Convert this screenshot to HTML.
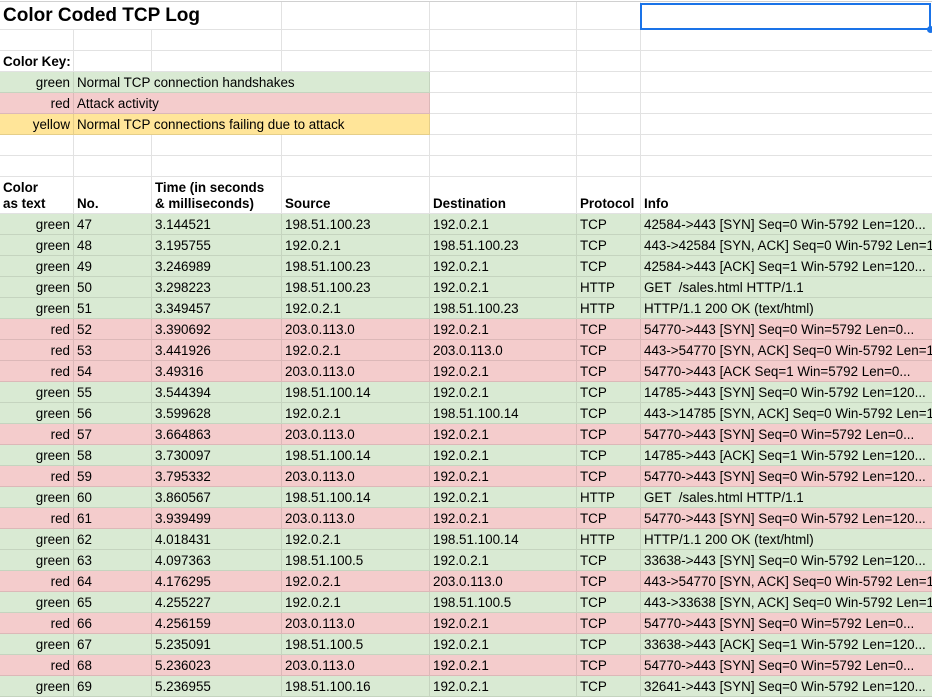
<!DOCTYPE html><html><head><style>
body{margin:0;width:932px;height:696px;overflow:hidden;background:#fff;font-family:"Liberation Sans",Arial,sans-serif;font-size:13.4px;color:#000;position:relative}
.r{position:absolute;left:0;width:932px;height:21px;display:flex}
.c{box-sizing:border-box;height:100%;border-right:1px solid #e2e2e2;border-bottom:1px solid #e2e2e2;padding:3px 3px 0 3px;white-space:nowrap;overflow:hidden;line-height:16px}
.w0{width:74px;text-align:right}.w1{width:78px}.w2{width:130px}.w3{width:148px}.w4{width:147px}.w5{width:64px}.w6{width:291px;border-right:none}
.g .c{background:#d9ead3;border-color:#c5d4bf}.rd .c{background:#f4cccc;border-color:#dcb8b8}.y .c{background:#ffe599;border-color:#e5ce89}
.b{font-weight:bold}
</style></head><body>
<div style="position:absolute;left:0;top:0;width:932px;height:2px;border-bottom:1px solid #d0d0d0;box-sizing:border-box"></div>
<div class="r" style="top:2px;height:28px"><div class="c w0 b" style="width:282px;text-align:left;font-size:19px;line-height:24px;padding-top:2px;border-right:1px solid #e2e2e2">Color Coded TCP Log</div><div class="c w3"></div><div class="c w4"></div><div class="c w5"></div><div class="c w6"></div></div>
<div style="position:absolute;left:640px;top:3px;width:291px;height:27px;border:2px solid #1a73e8;box-sizing:border-box"></div>
<div style="position:absolute;left:927px;top:26px;width:7px;height:7px;border-radius:50%;background:#1a73e8"></div>
<div class="r" style="top:30px"><div class="c w0"></div><div class="c w1"></div><div class="c w2"></div><div class="c w3"></div><div class="c w4"></div><div class="c w5"></div><div class="c w6"></div></div>
<div class="r" style="top:51px"><div class="c w0 b" style="text-align:left">Color Key:</div><div class="c w1"></div><div class="c w2"></div><div class="c w3"></div><div class="c w4"></div><div class="c w5"></div><div class="c w6"></div></div>
<div class="r" style="top:72px"><div class="g" style="display:flex"><div class="c w0">green</div><div class="c" style="width:356px">Normal TCP connection handshakes</div></div><div class="c w4"></div><div class="c w5"></div><div class="c w6"></div></div>
<div class="r" style="top:93px"><div class="rd" style="display:flex"><div class="c w0">red</div><div class="c" style="width:356px">Attack activity</div></div><div class="c w4"></div><div class="c w5"></div><div class="c w6"></div></div>
<div class="r" style="top:114px"><div class="y" style="display:flex"><div class="c w0">yellow</div><div class="c" style="width:356px">Normal TCP connections failing due to attack</div></div><div class="c w4"></div><div class="c w5"></div><div class="c w6"></div></div>
<div class="r" style="top:135px"><div class="c w0"></div><div class="c w1"></div><div class="c w2"></div><div class="c w3"></div><div class="c w4"></div><div class="c w5"></div><div class="c w6"></div></div>
<div class="r" style="top:156px"><div class="c w0"></div><div class="c w1"></div><div class="c w2"></div><div class="c w3"></div><div class="c w4"></div><div class="c w5"></div><div class="c w6"></div></div>
<div class="r b" style="top:177px;height:37px"><div class="c w0" style="text-align:left">Color<br>as text</div><div class="c w1" style="padding-top:19px">No.</div><div class="c w2">Time (in seconds<br>&amp; milliseconds)</div><div class="c w3" style="padding-top:19px">Source</div><div class="c w4" style="padding-top:19px">Destination</div><div class="c w5" style="padding-top:19px">Protocol</div><div class="c w6" style="padding-top:19px">Info</div></div>
<div id="d"></div>
<script>
const rows=[
["g",47,"3.144521","198.51.100.23","192.0.2.1","TCP","42584->443 [SYN] Seq=0 Win-5792 Len=120..."],
["g",48,"3.195755","192.0.2.1","198.51.100.23","TCP","443->42584 [SYN, ACK] Seq=0 Win-5792 Len=120..."],
["g",49,"3.246989","198.51.100.23","192.0.2.1","TCP","42584->443 [ACK] Seq=1 Win-5792 Len=120..."],
["g",50,"3.298223","198.51.100.23","192.0.2.1","HTTP","GET &nbsp;/sales.html HTTP/1.1"],
["g",51,"3.349457","192.0.2.1","198.51.100.23","HTTP","HTTP/1.1 200 OK (text/html)"],
["rd",52,"3.390692","203.0.113.0","192.0.2.1","TCP","54770->443 [SYN] Seq=0 Win=5792 Len=0..."],
["rd",53,"3.441926","192.0.2.1","203.0.113.0","TCP","443->54770 [SYN, ACK] Seq=0 Win-5792 Len=120..."],
["rd",54,"3.49316","203.0.113.0","192.0.2.1","TCP","54770->443 [ACK Seq=1 Win=5792 Len=0..."],
["g",55,"3.544394","198.51.100.14","192.0.2.1","TCP","14785->443 [SYN] Seq=0 Win-5792 Len=120..."],
["g",56,"3.599628","192.0.2.1","198.51.100.14","TCP","443->14785 [SYN, ACK] Seq=0 Win-5792 Len=120..."],
["rd",57,"3.664863","203.0.113.0","192.0.2.1","TCP","54770->443 [SYN] Seq=0 Win=5792 Len=0..."],
["g",58,"3.730097","198.51.100.14","192.0.2.1","TCP","14785->443 [ACK] Seq=1 Win-5792 Len=120..."],
["rd",59,"3.795332","203.0.113.0","192.0.2.1","TCP","54770->443 [SYN] Seq=0 Win-5792 Len=120..."],
["g",60,"3.860567","198.51.100.14","192.0.2.1","HTTP","GET &nbsp;/sales.html HTTP/1.1"],
["rd",61,"3.939499","203.0.113.0","192.0.2.1","TCP","54770->443 [SYN] Seq=0 Win-5792 Len=120..."],
["g",62,"4.018431","192.0.2.1","198.51.100.14","HTTP","HTTP/1.1 200 OK (text/html)"],
["g",63,"4.097363","198.51.100.5","192.0.2.1","TCP","33638->443 [SYN] Seq=0 Win-5792 Len=120..."],
["rd",64,"4.176295","192.0.2.1","203.0.113.0","TCP","443->54770 [SYN, ACK] Seq=0 Win-5792 Len=120..."],
["g",65,"4.255227","192.0.2.1","198.51.100.5","TCP","443->33638 [SYN, ACK] Seq=0 Win-5792 Len=120..."],
["rd",66,"4.256159","203.0.113.0","192.0.2.1","TCP","54770->443 [SYN] Seq=0 Win=5792 Len=0..."],
["g",67,"5.235091","198.51.100.5","192.0.2.1","TCP","33638->443 [ACK] Seq=1 Win-5792 Len=120..."],
["rd",68,"5.236023","203.0.113.0","192.0.2.1","TCP","54770->443 [SYN] Seq=0 Win=5792 Len=0..."],
["g",69,"5.236955","198.51.100.16","192.0.2.1","TCP","32641->443 [SYN] Seq=0 Win-5792 Len=120..."]];
let h="";rows.forEach((r,i)=>{h+=`<div class="r ${r[0]}" style="top:${214+i*21}px"><div class="c w0">${r[0]=="g"?"green":"red"}</div><div class="c w1">${r[1]}</div><div class="c w2">${r[2]}</div><div class="c w3">${r[3]}</div><div class="c w4">${r[4]}</div><div class="c w5">${r[5]}</div><div class="c w6">${r[6]}</div></div>`});
document.getElementById("d").innerHTML=h;
</script>
</body></html>
